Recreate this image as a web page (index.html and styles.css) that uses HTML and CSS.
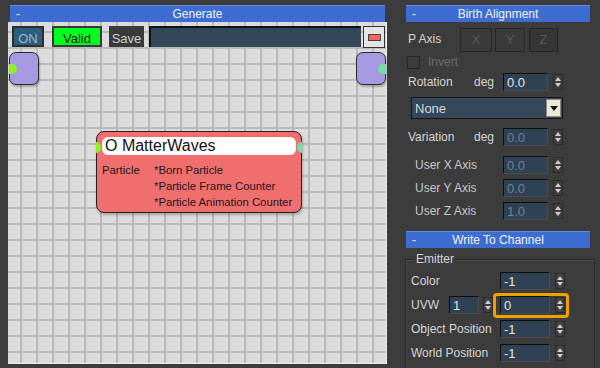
FILE: index.html
```html
<!DOCTYPE html>
<html lang="en">
<head>
    <meta charset="UTF-8">
    <meta name="viewport" content="width=device-width, initial-scale=1.0">
    <title>Generate</title>
    <link rel="stylesheet" href="styles.css">
</head>
<body>
<div class="app">

    <div class="graph-panel">
        <div class="rollout-head"><span class="minus">-</span>Generate</div>
        <div class="canvas">
            <div class="toolbar">
                <div class="tb-btn on">ON</div>
                <div class="tb-btn valid">Valid</div>
                <div class="tb-btn save">Save</div>
                <div class="tb-name"></div>
                <div class="tb-btn close"><span class="close-mark"></span></div>
            </div>

            <div class="port-node in-node"><span class="dot dot-left lime"></span></div>
            <div class="port-node out-node"><span class="dot dot-right mint"></span></div>

            <div class="op-node">
                <span class="dot dot-left lime node-dot"></span>
                <span class="dot dot-right mint node-dot"></span>
                <div class="op-title">O MatterWaves</div>
                <div class="op-body">
                    <div class="op-label">Particle</div>
                    <div class="op-list">
                        <div>*Born Particle</div>
                        <div>*Particle Frame Counter</div>
                        <div>*Particle Animation Counter</div>
                    </div>
                </div>
            </div>
        </div>
    </div>

    <div class="side-panel">
        <div class="rollout-head"><span class="minus">-</span>Birth Alignment</div>

        <div class="row axis-row">
            <span class="lbl w-axis">P Axis</span>
            <span class="axis-btn ax-x">X</span>
            <span class="axis-btn ax-y">Y</span>
            <span class="axis-btn ax-z pressed">Z</span>
        </div>
        <div class="row check-row">
            <span class="check"></span>
            <span class="lbl dim">Invert</span>
        </div>
        <div class="row field-row rot-row">
            <span class="lbl w-rot">Rotation</span>
            <span class="lbl w-deg">deg</span>
            <span class="field">0.0</span>
            <span class="spin"></span>
        </div>
        <div class="dropdown">
            <span>None</span>
            <span class="drop-btn"></span>
        </div>
        <div class="row field-row var-row">
            <span class="lbl w-rot">Variation</span>
            <span class="lbl w-deg">deg</span>
            <span class="field off">0.0</span>
            <span class="spin"></span>
        </div>
        <div class="row field-row user-row ux">
            <span class="lbl w-user">User X Axis</span>
            <span class="field off">0.0</span>
            <span class="spin"></span>
        </div>
        <div class="row field-row user-row uy">
            <span class="lbl w-user">User Y Axis</span>
            <span class="field off">0.0</span>
            <span class="spin"></span>
        </div>
        <div class="row field-row user-row uz">
            <span class="lbl w-user">User Z Axis</span>
            <span class="field off">1.0</span>
            <span class="spin"></span>
        </div>

        <div class="rollout-head channel-head"><span class="minus">-</span>Write To Channel</div>

        <div class="group">
            <div class="group-title">Emitter</div>
            <div class="row ch-row">
                <span class="lbl w-ch">Color</span>
                <span class="field wide">-1</span>
                <span class="spin"></span>
            </div>
            <div class="row ch-row">
                <span class="lbl w-uvw">UVW</span>
                <span class="field small">1</span>
                <span class="spin uvw-spin"></span>
                <span class="highlight">
                    <span class="field wide">0</span>
                    <span class="spin"></span>
                </span>
            </div>
            <div class="row ch-row">
                <span class="lbl w-ch">Object Position</span>
                <span class="field wide">-1</span>
                <span class="spin"></span>
            </div>
            <div class="row ch-row">
                <span class="lbl w-ch">World Position</span>
                <span class="field wide">-1</span>
                <span class="spin"></span>
            </div>
        </div>
    </div>

</div>
</body>
</html>
```

FILE: styles.css
```css
body {
    margin: 0;
    width: 600px;
    height: 368px;
    overflow: hidden;
    background: #3c3c3c;
    font-family: "Liberation Sans", Arial, sans-serif;
    font-size: 12px;
    color: #d6d6d6;
}
.app {
    display: flex;
    height: 368px;
}

/* rollout headers */
.rollout-head {
    position: relative;
    height: 17px;
    line-height: 17px;
    background: #3d6dd0;
    color: #f2f2f2;
    text-align: center;
    font-size: 12px;
    border-top: 1px solid #5d8ae0;
    box-sizing: border-box;
}
.minus {
    position: absolute;
    left: 6px;
    top: 0;
}

/* left: graph editor */
.graph-panel {
    width: 379px;
    margin-left: 8px;
    padding-top: 5px;
    display: flex;
    flex-direction: column;
}
.graph-panel .rollout-head {
    margin: 0 2px;
}
.canvas {
    position: relative;
    height: 342px;
    background-color: #dcdcdc;
    background-image:
        linear-gradient(to right, #b9b9b9 2px, transparent 2px),
        linear-gradient(to bottom, #b9b9b9 2px, transparent 2px);
    background-size: 16px 16px;
    background-position: 12px 9px;
    border-right: 1px solid #ececec;
    border-bottom: 1px solid #ececec;
    box-sizing: border-box;
}
.toolbar {
    display: flex;
    padding: 4px 0 0 4px;
    height: 21px;
}
.tb-btn {
    height: 21px;
    line-height: 21px;
    text-align: center;
    box-sizing: border-box;
    border: 2px solid #2e2e2e;
    font-size: 13px;
}
.on {
    width: 32px;
    background: #2a5f82;
    color: #9fb6c8;
}
.valid {
    width: 50px;
    margin-left: 8px;
    background: #00ff1e;
    color: #1c1c1c;
    border-color: #3a3a3a;
}
.save {
    width: 35px;
    margin-left: 7px;
    background: #3a3a3a;
    color: #cfcfcf;
    border-color: #3a3a3a;
}
.tb-name {
    width: 212px;
    height: 21px;
    margin-left: 5px;
    background: #34475a;
    border-top: 2px solid #111;
    border-left: 2px solid #111;
    box-sizing: border-box;
}
.close {
    width: 22px;
    height: 22px;
    margin-left: 2px;
    background: #e4e4e4;
    border: 1px solid #333;
    display: flex;
    align-items: center;
    justify-content: center;
}
.close-mark {
    width: 11px;
    height: 5px;
    background: #f06464;
    border: 1px solid #444;
}

/* nodes on the canvas */
.port-node {
    position: absolute;
    top: 30px;
    width: 28px;
    height: 31px;
    background: #a699e2;
    border: 1px solid #2a2a2a;
    border-radius: 7px;
    box-shadow: 1px 2px 2px rgba(0, 0, 0, 0.25);
}
.in-node {
    left: 1px;
}
.out-node {
    left: 348px;
}
.dot {
    position: absolute;
    width: 8px;
    height: 10px;
    top: 11px;
}
.dot-left {
    left: -1px;
    border-radius: 0 5px 5px 0;
}
.dot-right {
    right: -1px;
    border-radius: 5px 0 0 5px;
}
.lime {
    background: #90f028;
}
.mint {
    background: #6ee0a0;
}

.op-node {
    position: absolute;
    left: 88px;
    top: 109px;
    width: 206px;
    height: 82px;
    box-sizing: border-box;
    background: #f06e6e;
    border: 1px solid #222;
    border-radius: 8px;
    box-shadow: 1px 2px 3px rgba(0, 0, 0, 0.25);
    padding: 5px 5px 0 5px;
    color: #1a1a1a;
}
.op-node .node-dot {
    top: 10px;
    height: 11px;
    width: 5px;
}
.op-title {
    height: 18px;
    line-height: 18px;
    background: #ffffff;
    border-radius: 6px;
    padding-left: 3px;
    font-size: 16px;
    color: #111;
}
.op-body {
    display: flex;
    margin-top: 7px;
    font-size: 11.3px;
    line-height: 16px;
}
.op-label {
    width: 52px;
}

/* right: properties */
.side-panel {
    width: 184px;
    margin-left: 19px;
    padding-top: 5px;
}
.row {
    display: flex;
    align-items: center;
    padding-left: 2px;
}
.lbl {
    font-size: 12px;
    color: #d6d6d6;
    white-space: nowrap;
}
.dim {
    color: #6c6c6c;
}
.w-axis {
    width: 52px;
    height: 24px;
    line-height: 22px;
}
.axis-row {
    margin-top: 6px;
}
.axis-btn {
    height: 24px;
    line-height: 22px;
    text-align: center;
    color: #5a5a5a;
    font-size: 13px;
    border: 1px solid #262626;
    box-sizing: border-box;
    background: #3a3a3a;
}
.ax-x {
    width: 32px;
}
.ax-y {
    width: 30px;
    margin-left: 3px;
}
.ax-z {
    width: 29px;
    margin-left: 4px;
}
.pressed {
    background: #353535;
    border-color: #222;
}
.check-row {
    margin-top: 3px;
    margin-left: -1px;
}
.check {
    width: 13px;
    height: 13px;
    box-sizing: border-box;
    border: 1px solid #262626;
    margin-right: 8px;
}

.field-row {
    height: 18px;
}
.rot-row {
    margin-top: 4px;
}
.w-rot {
    width: 66px;
}
.w-deg {
    width: 29px;
}
.field {
    width: 45px;
    height: 18px;
    line-height: 17px;
    box-sizing: border-box;
    padding-left: 3px;
    background: #2f4154;
    border-top: 1px solid #0e0e0e;
    border-left: 1px solid #0e0e0e;
    border-bottom: 1px solid #4c4c4c;
    border-right: 1px solid #4c4c4c;
    color: #e4e4e4;
    font-size: 13px;
}
.field.off {
    color: #6f8193;
}
.spin {
    position: relative;
    width: 10px;
    height: 16px;
    margin-left: 5px;
    box-sizing: border-box;
    border: 1px solid #2a2a2a;
    background: #3e3e3e;
}
.spin::before,
.spin::after {
    content: "";
    position: absolute;
    left: 1px;
    border-left: 3px solid transparent;
    border-right: 3px solid transparent;
}
.spin::before {
    top: 2px;
    border-bottom: 4px solid #cfcfcf;
}
.spin::after {
    bottom: 2px;
    border-top: 4px solid #cfcfcf;
}

.dropdown {
    display: flex;
    align-items: center;
    justify-content: space-between;
    width: 152px;
    height: 22px;
    margin: 6px 0 0 5px;
    box-sizing: border-box;
    padding: 0 1px 0 3px;
    background: #34475b;
    border: 1px solid #161616;
    font-size: 13px;
    color: #d8d8d8;
}
.drop-btn {
    position: relative;
    width: 15px;
    height: 18px;
    background: #ece8d6;
    border: 1px solid #888;
    box-sizing: border-box;
}
.drop-btn::after {
    content: "";
    position: absolute;
    left: 3px;
    top: 6px;
    border-left: 4px solid transparent;
    border-right: 4px solid transparent;
    border-top: 5px solid #111;
}
.var-row {
    margin-top: 9px;
}
.w-user {
    width: 88px;
    padding-left: 7px;
    color: #c8c8c8;
}
.ux {
    margin-top: 10px;
}
.uy {
    margin-top: 5px;
}
.uz {
    margin-top: 5px;
}

.channel-head {
    margin-top: 11px;
}
.group {
    position: relative;
    margin: 11px 0 0 -1px;
    width: 190px;
    height: 110px;
    border: 1px solid #2b2b2b;
    border-bottom: none;
    box-shadow: inset 1px 1px 0 #4a4a4a;
    padding-top: 9px;
    box-sizing: border-box;
}
.group-title {
    position: absolute;
    top: -8px;
    left: 8px;
    padding: 0 2px;
    background: #3c3c3c;
    color: #d6d6d6;
}
.ch-row {
    height: 24px;
    padding-left: 5px;
}
.w-ch {
    width: 89px;
}
.w-uvw {
    width: 38px;
}
.field.wide {
    width: 50px;
}
.field.small {
    width: 30px;
}
.uvw-spin {
    margin-left: 4px;
}
.highlight {
    display: flex;
    align-items: center;
    height: 25px;
    padding: 0 1px 0 4px;
    box-sizing: border-box;
    border: 3px solid #f0a000;
    border-radius: 4px;
}
```
